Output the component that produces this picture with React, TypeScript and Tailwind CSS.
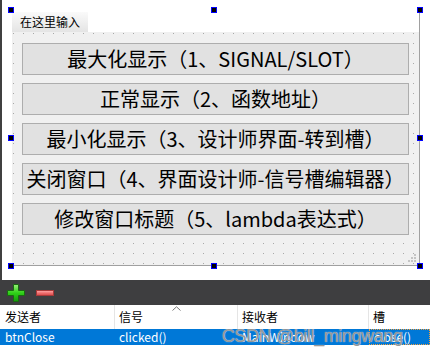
import React from 'react';

// Qt Designer style form preview with a signal/slot editor below

const buttons = [
  '最大化显示（1、SIGNAL/SLOT）',
  '正常显示（2、函数地址）',
  '最小化显示（3、设计师界面-转到槽）',
  '关闭窗口（4、界面设计师-信号槽编辑器）',
  '修改窗口标题（5、lambda表达式）',
];

const handles = [
  'left-[8px] top-[7px]',
  'left-[211px] top-[7px]',
  'left-[417px] top-[7px]',
  'left-[8px] top-[135px]',
  'left-[417px] top-[135px]',
  'left-[8px] top-[263px]',
  'left-[211px] top-[263px]',
  'left-[417px] top-[263px]',
];

function Handle({ pos }: { pos: string }) {
  return <div className={`absolute ${pos} w-[6px] h-[6px] border border-[#0000ff] bg-black`} />;
}

function SizeGrip() {
  return (
    <svg width="10" height="10" viewBox="0 0 10 10" className="absolute right-[2px] bottom-[2px]">
      <rect x="7" y="1" width="2" height="2" fill="#c4c4c4" />
      <rect x="4" y="4" width="2" height="2" fill="#c4c4c4" />
      <rect x="7" y="4" width="2" height="2" fill="#c4c4c4" />
      <rect x="1" y="7" width="2" height="2" fill="#c4c4c4" />
      <rect x="4" y="7" width="2" height="2" fill="#c4c4c4" />
      <rect x="7" y="7" width="2" height="2" fill="#c4c4c4" />
    </svg>
  );
}

function PlusIcon() {
  return (
    <svg width="20" height="20" viewBox="0 0 20 20">
      <defs>
        <linearGradient id="pg" x1="0" y1="0" x2="0" y2="1">
          <stop offset="0" stopColor="#9af07a" />
          <stop offset="0.5" stopColor="#2fd018" />
          <stop offset="1" stopColor="#129a0a" />
        </linearGradient>
      </defs>
      <path
        d="M7.5 1.5h5v6h6v5h-6v6h-5v-6h-6v-5h6z"
        fill="url(#pg)"
        stroke="#1a6a12"
        strokeWidth="1"
      />
    </svg>
  );
}

function MinusIcon() {
  return (
    <svg width="20" height="8" viewBox="0 0 20 8">
      <defs>
        <linearGradient id="mg" x1="0" y1="0" x2="0" y2="1">
          <stop offset="0" stopColor="#ffb0b0" />
          <stop offset="0.5" stopColor="#f07070" />
          <stop offset="1" stopColor="#d84848" />
        </linearGradient>
      </defs>
      <rect x="1.5" y="1.5" width="17" height="5" fill="url(#mg)" stroke="#a83a3a" strokeWidth="1" />
    </svg>
  );
}

export default function App() {
  return (
    <div className="relative w-[430px] h-[360px] bg-white overflow-hidden font-['Noto_Sans_CJK_SC','Noto_Sans',sans-serif] text-black">
      {/* ===== Designer canvas ===== */}
      <div className="h-[280px] border-l-2 border-[#404040] pl-[10px] pt-[12px]">
        <div className="w-[408px] h-[254px] flex flex-col border-r border-b border-[#a0a0a0]">
          <div className="w-[76px] h-[20px] flex items-center pl-[8px] text-[12px] leading-none bg-gradient-to-b from-[#fafafa] to-[#e4e4e4]">
            在这里输入
          </div>
          <div className="relative flex-1 flex flex-col gap-[8px] pt-[11px] px-[10px] bg-[#f0f0f0] bg-[radial-gradient(circle_at_1.5px_1.5px,#a8a8a8_0.6px,transparent_0.9px)] bg-[length:10px_10px]">
            {buttons.map((label) => (
              <div
                key={label}
                className="h-[32px] flex items-center justify-center border border-[#adadad] bg-[#e1e1e1] text-[20px] leading-none whitespace-nowrap"
              >
                {label}
              </div>
            ))}
            <SizeGrip />
          </div>
        </div>
      </div>

      {/* ===== Signal/slot editor toolbar ===== */}
      <div className="h-[25px] bg-[#3e3e40] flex items-center gap-[9px] pl-[6px]">
        <PlusIcon />
        <MinusIcon />
      </div>

      {/* ===== Connections table ===== */}
      <div className="text-[12px]">
        <div className="relative h-[24px] flex items-center">
          <div className="w-[115px] pl-[5px] border-r border-[#e5e5e5] h-full flex items-center">发送者</div>
          <div className="w-[123px] pl-[4px] border-r border-[#e5e5e5] h-full flex items-center">信号</div>
          <div className="w-[131px] pl-[4px] border-r border-[#e5e5e5] h-full flex items-center">接收者</div>
          <div className="flex-1 pl-[4px] h-full flex items-center">槽</div>
          <svg width="9" height="5" viewBox="0 0 9 5" className="absolute left-[172px] top-[1px]">
            <path d="M0.5 4.5L4.5 0.8L8.5 4.5" fill="none" stroke="#777" strokeWidth="1" />
          </svg>
        </div>
        <div className="h-[16px] flex items-center bg-[#0078d7] text-white">
          <div className="w-[115px] pl-[5px]">btnClose</div>
          <div className="w-[123px] pl-[4px]">clicked()</div>
          <div className="w-[131px] pl-[4px]">MainWindow</div>
          <div className="flex-1 h-full pl-[4px] flex items-center border border-dotted border-[#f0a040]">close()</div>
        </div>
      </div>

      {/* ===== Selection handles ===== */}
      {handles.map((pos) => (
        <Handle key={pos} pos={pos} />
      ))}

      {/* ===== Watermark ===== */}
      <div className="absolute left-[222px] top-[327px] text-[18px] tracking-[-0.4px] leading-none font-['Liberation_Sans',sans-serif] text-[#8a8a8a]/90 [text-shadow:0_0_1px_#ffffff] whitespace-nowrap">
        CSDN @bill_mingwang
      </div>
    </div>
  );
}
